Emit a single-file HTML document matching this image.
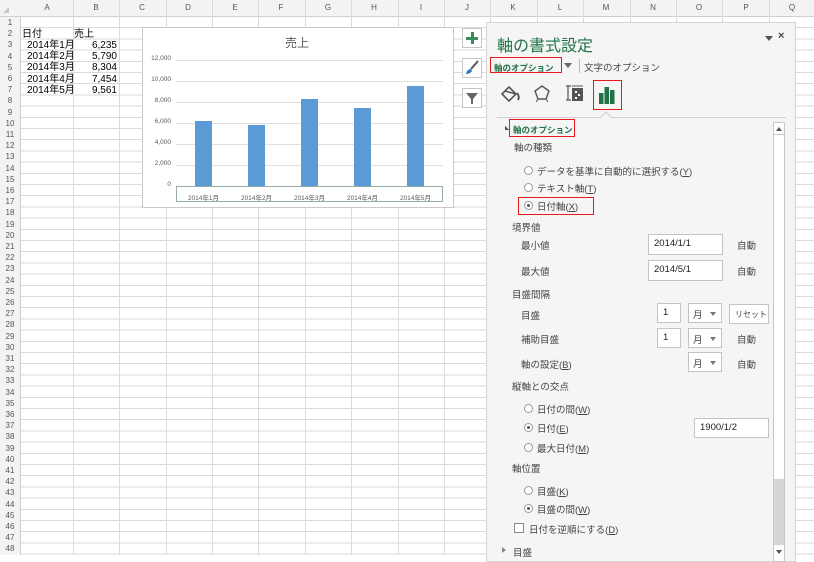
<!DOCTYPE html>
<html><head><meta charset="utf-8"><style>
*{margin:0;padding:0;box-sizing:border-box}
body{width:814px;height:555px;overflow:hidden;background:#fff;position:relative;font-family:"Liberation Sans","Noto Sans CJK JP",sans-serif;color:#444}
.a{position:absolute;white-space:nowrap}
#hdr{position:absolute;left:0;top:0;width:814px;height:17px;background:#f3f3f3;border-bottom:1px solid #d0d0d0}
#rh{position:absolute;left:0;top:17px;width:21px;height:538px;background:#f3f3f3;border-right:1px solid #d0d0d0}
#grid{position:absolute;left:21px;top:17px;width:793px;height:538px;
background:repeating-linear-gradient(to bottom,transparent 0,transparent 10.2px,#dadada 10.2px,#dadada 11.2px)}
.vl{position:absolute;top:0;width:1px;height:555px;background:#dadada}
.ch{position:absolute;top:3px;font-size:8px;color:#555;width:20px;text-align:center}
.rn{position:absolute;left:0;width:20px;text-align:center;font-size:8px;color:#555;line-height:11px}
.cell{position:absolute;font-size:10px;color:#000;line-height:11px;white-space:nowrap}
#chart{position:absolute;left:142px;top:27px;width:312px;height:181px;background:#fff;border:1px solid #c8c8c8}
.gl{position:absolute;left:33px;width:267px;height:1px;background:#e0e0e0}
.yl{position:absolute;left:0;width:28px;text-align:right;font-size:6.5px;color:#595959}
.bar{position:absolute;width:17px;background:#5b9bd5}
.xl{position:absolute;font-size:6.5px;color:#595959;width:53px;text-align:center}
.sb{position:absolute;left:462px;width:20px;height:20px;border:1px solid #c6c6c6;background:#fff}
#pane{position:absolute;left:486px;top:22px;width:310px;height:540px;background:#f5f5f5;border:1px solid #d4d4d4}
.t{position:absolute;font-size:9.5px;color:#444;white-space:nowrap}
.rad{position:absolute;width:9px;height:9px;border:1px solid #9a9a9a;border-radius:50%;background:#fff}
.rad.on::after{content:"";position:absolute;left:2px;top:2px;width:3px;height:3px;border-radius:50%;background:#555}
.inp{position:absolute;background:#fff;border:1px solid #c4c4c4;font-size:9.5px;color:#222;padding:3px 0 0 5px;white-space:nowrap}
.sel{position:absolute;background:#fff;border:1px solid #c4c4c4;font-size:9.5px;color:#444;padding:3px 0 0 4px}
.sel::after{content:"";position:absolute;right:5px;top:8px;border:3px solid transparent;border-top:4px solid #777}
.red{position:absolute;border:1.5px solid #e8191b}
u{text-decoration:underline}
</style></head><body>
<div id="hdr"></div>
<div id="rh"></div>
<div id="grid"></div>
<div class="vl" style="left:73px"></div><div class="vl" style="left:119px"></div><div class="vl" style="left:166px"></div><div class="vl" style="left:212px"></div><div class="vl" style="left:258px"></div><div class="vl" style="left:305px"></div><div class="vl" style="left:351px"></div><div class="vl" style="left:398px"></div><div class="vl" style="left:444px"></div><div class="vl" style="left:490px"></div><div class="vl" style="left:537px"></div><div class="vl" style="left:583px"></div><div class="vl" style="left:630px"></div><div class="vl" style="left:676px"></div><div class="vl" style="left:722px"></div><div class="vl" style="left:769px"></div>
<div class="a" style="left:3px;top:7px;width:0;height:0;border-left:6px solid transparent;border-bottom:6px solid #c8c8c8"></div>
<div class="ch" style="left:37px">A</div><div class="ch" style="left:86px">B</div><div class="ch" style="left:132px">C</div><div class="ch" style="left:178px">D</div><div class="ch" style="left:225px">E</div><div class="ch" style="left:271px">F</div><div class="ch" style="left:318px">G</div><div class="ch" style="left:364px">H</div><div class="ch" style="left:411px">I</div><div class="ch" style="left:457px">J</div><div class="ch" style="left:503px">K</div><div class="ch" style="left:550px">L</div><div class="ch" style="left:596px">M</div><div class="ch" style="left:643px">N</div><div class="ch" style="left:689px">O</div><div class="ch" style="left:736px">P</div><div class="ch" style="left:782px">Q</div>
<div style="position:absolute;left:0;top:17px">
<div class="rn" style="top:0px">1</div><div class="rn" style="top:11.2px">2</div><div class="rn" style="top:22.4px">3</div><div class="rn" style="top:33.6px">4</div><div class="rn" style="top:44.8px">5</div><div class="rn" style="top:56px">6</div><div class="rn" style="top:67.2px">7</div><div class="rn" style="top:78.4px">8</div><div class="rn" style="top:89.6px">9</div><div class="rn" style="top:100.8px">10</div><div class="rn" style="top:112px">11</div><div class="rn" style="top:123.2px">12</div><div class="rn" style="top:134.4px">13</div><div class="rn" style="top:145.6px">14</div><div class="rn" style="top:156.8px">15</div><div class="rn" style="top:168px">16</div><div class="rn" style="top:179.2px">17</div><div class="rn" style="top:190.4px">18</div><div class="rn" style="top:201.6px">19</div><div class="rn" style="top:212.8px">20</div><div class="rn" style="top:224px">21</div><div class="rn" style="top:235.2px">22</div><div class="rn" style="top:246.4px">23</div><div class="rn" style="top:257.6px">24</div><div class="rn" style="top:268.8px">25</div><div class="rn" style="top:280px">26</div><div class="rn" style="top:291.2px">27</div><div class="rn" style="top:302.4px">28</div><div class="rn" style="top:313.6px">29</div><div class="rn" style="top:324.8px">30</div><div class="rn" style="top:336px">31</div><div class="rn" style="top:347.2px">32</div><div class="rn" style="top:358.4px">33</div><div class="rn" style="top:369.6px">34</div><div class="rn" style="top:380.8px">35</div><div class="rn" style="top:392px">36</div><div class="rn" style="top:403.2px">37</div><div class="rn" style="top:414.4px">38</div><div class="rn" style="top:425.6px">39</div><div class="rn" style="top:436.8px">40</div><div class="rn" style="top:448px">41</div><div class="rn" style="top:459.2px">42</div><div class="rn" style="top:470.4px">43</div><div class="rn" style="top:481.6px">44</div><div class="rn" style="top:492.8px">45</div><div class="rn" style="top:504px">46</div><div class="rn" style="top:515.2px">47</div><div class="rn" style="top:526.4px">48</div>
</div>
<div class="cell" style="left:22px;top:29px">日付</div><div class="cell" style="left:74px;top:29px">売上</div>
<div class="cell" style="left:27px;top:40px">2014年1月</div><div class="cell" style="left:88px;top:40px;width:29px;text-align:right">6,235</div>
<div class="cell" style="left:27px;top:51px">2014年2月</div><div class="cell" style="left:88px;top:51px;width:29px;text-align:right">5,790</div>
<div class="cell" style="left:27px;top:62px">2014年3月</div><div class="cell" style="left:88px;top:62px;width:29px;text-align:right">8,304</div>
<div class="cell" style="left:27px;top:74px">2014年4月</div><div class="cell" style="left:88px;top:74px;width:29px;text-align:right">7,454</div>
<div class="cell" style="left:27px;top:85px">2014年5月</div><div class="cell" style="left:88px;top:85px;width:29px;text-align:right">9,561</div>

<div id="chart">
<div class="a" style="left:142px;top:6px;font-size:12px;color:#595959">売上</div>
<div class="gl" style="top:32px"></div><div class="gl" style="top:53px"></div><div class="gl" style="top:74px"></div><div class="gl" style="top:95px"></div><div class="gl" style="top:116px"></div><div class="gl" style="top:137px"></div><div class="gl" style="top:158px;background:#bfbfbf"></div>
<div class="yl" style="top:27px">12,000</div><div class="yl" style="top:48px">10,000</div><div class="yl" style="top:69px">8,000</div><div class="yl" style="top:90px">6,000</div><div class="yl" style="top:111px">4,000</div><div class="yl" style="top:132px">2,000</div><div class="yl" style="top:153px">0</div>
<div class="bar" style="left:52px;top:93px;height:65px"></div>
<div class="bar" style="left:105px;top:97px;height:61px"></div>
<div class="bar" style="left:158px;top:71px;height:87px"></div>
<div class="bar" style="left:211px;top:80px;height:78px"></div>
<div class="bar" style="left:264px;top:58px;height:100px"></div>
<div class="a" style="left:33px;top:158px;width:267px;height:16px;border:1px solid #9aa"></div>
<div class="xl" style="left:34px;top:164px">2014年1月</div><div class="xl" style="left:87px;top:164px">2014年2月</div><div class="xl" style="left:140px;top:164px">2014年3月</div><div class="xl" style="left:193px;top:164px">2014年4月</div><div class="xl" style="left:246px;top:164px">2014年5月</div>
</div>
<div class="sb" style="top:28px"><div class="a" style="left:8px;top:3px;width:3px;height:12px;background:#3d8b5a"></div><div class="a" style="left:3px;top:8px;width:12px;height:3px;background:#3d8b5a"></div></div>
<div class="sb" style="top:58px"><svg width="18" height="18" style="position:absolute;left:0;top:0"><path d="M15 2 L8 10" stroke="#555" stroke-width="2"/><path d="M3 15 Q4 10 8 10 L9 12 Q7 15 3 15Z" fill="#2e75b6"/></svg></div>
<div class="sb" style="top:88px"><svg width="18" height="18" style="position:absolute;left:0;top:0"><path d="M3 4 H15 L10 10 V15 H8 V10Z" fill="#666"/></svg></div>

<div id="pane">
<div class="a" style="left:10px;top:9px;font-size:16px;color:#217346">軸の書式設定</div>
<div class="a" style="left:278px;top:13px;border:4px solid transparent;border-top:5px solid #555"></div>
<div class="a" style="left:291px;top:7px;font-size:11px;color:#444;font-weight:bold">×</div>
<div class="a" style="left:7px;top:39px;font-size:8.5px;color:#217346;font-weight:bold">軸のオプション</div>
<div class="a" style="left:77px;top:40px;border:4px solid transparent;border-top:5px solid #666"></div>
<div class="a" style="left:92px;top:36px;width:1px;height:14px;background:#bbb"></div>
<div class="a" style="left:97px;top:37px;font-size:9.5px;color:#444">文字のオプション</div>
<svg class="a" style="left:12px;top:60px" width="24" height="24"><path d="M3 11 L10 4 L17 11 L10 18Z" fill="none" stroke="#555" stroke-width="1.6"/><path d="M6 8 L17 11" stroke="#555" stroke-width="1.5"/><path d="M18 10 Q21 14 19 17" stroke="#555" stroke-width="2" fill="none"/></svg>
<svg class="a" style="left:44px;top:60px" width="22" height="22"><path d="M11 3 L18 8 L15 16 L7 16 L4 8Z" fill="none" stroke="#555" stroke-width="1.4"/><path d="M7 16 L5 19 M15 16 L17 19" stroke="#555"/></svg>
<svg class="a" style="left:76px;top:60px" width="22" height="22"><path d="M3 3 H8 M5 3 V17 M3 17 H8" stroke="#555" stroke-width="1.2"/><rect x="9" y="5" width="11" height="13" fill="#555"/><rect x="12" y="8" width="2" height="2" fill="#fff"/><rect x="15" y="11" width="2" height="2" fill="#fff"/><rect x="12" y="14" width="2" height="2" fill="#fff"/><path d="M9 3 H20" stroke="#555"/></svg>
<svg class="a" style="left:110px;top:62px" width="20" height="20"><rect x="2" y="8" width="4.5" height="11" fill="#217346"/><rect x="7.5" y="2" width="4.5" height="17" fill="#217346"/><rect x="13" y="5" width="4.5" height="14" fill="#217346"/></svg>
<div class="a" style="left:10px;top:94px;width:289px;height:1px;background:#d0d0d0"></div>
<div class="a" style="left:115px;top:90px;width:8px;height:8px;background:#f5f5f5;border-left:1px solid #ccc;border-top:1px solid #ccc;transform:rotate(45deg)"></div>
<div class="a" style="left:15px;top:104px;border:3px solid transparent;border-right:3px solid #555;transform:rotate(-45deg)"></div>
<div class="a" style="left:26px;top:101px;font-size:8.5px;color:#217346;font-weight:bold">軸のオプション</div>
<div class="t" style="left:27px;top:117px">軸の種類</div>
<div class="rad" style="left:37px;top:143px"></div><div class="t" style="left:50px;top:141px">データを基準に自動的に選択する(<u>Y</u>)</div>
<div class="rad" style="left:37px;top:160px"></div><div class="t" style="left:50px;top:158px">テキスト軸(<u>T</u>)</div>
<div class="rad on" style="left:37px;top:178px"></div><div class="t" style="left:50px;top:176px">日付軸(<u>X</u>)</div>
<div class="t" style="left:25px;top:197px">境界値</div>
<div class="t" style="left:34px;top:215px">最小値</div><div class="inp" style="left:161px;top:211px;width:75px;height:21px">2014/1/1</div><div class="t" style="left:250px;top:215px">自動</div>
<div class="t" style="left:34px;top:241px">最大値</div><div class="inp" style="left:161px;top:237px;width:75px;height:21px">2014/5/1</div><div class="t" style="left:250px;top:241px">自動</div>
<div class="t" style="left:25px;top:264px">目盛間隔</div>
<div class="t" style="left:34px;top:285px">目盛</div><div class="inp" style="left:170px;top:280px;width:24px;height:20px">1</div><div class="sel" style="left:201px;top:280px;width:34px;height:20px">月</div><div class="inp" style="left:242px;top:281px;width:40px;height:20px;font-size:8px;color:#444;padding:4px 0 0 5px">リセット</div>
<div class="t" style="left:34px;top:309px">補助目盛</div><div class="inp" style="left:170px;top:305px;width:24px;height:20px">1</div><div class="sel" style="left:201px;top:305px;width:34px;height:20px">月</div><div class="t" style="left:250px;top:309px">自動</div>
<div class="t" style="left:34px;top:334px">軸の設定(<u>B</u>)</div><div class="sel" style="left:201px;top:329px;width:34px;height:20px">月</div><div class="t" style="left:250px;top:334px">自動</div>
<div class="t" style="left:25px;top:356px">縦軸との交点</div>
<div class="rad" style="left:37px;top:381px"></div><div class="t" style="left:50px;top:379px">日付の間(<u>W</u>)</div>
<div class="rad on" style="left:37px;top:400px"></div><div class="t" style="left:50px;top:398px">日付(<u>E</u>)</div><div class="inp" style="left:207px;top:395px;width:75px;height:20px">1900/1/2</div>
<div class="rad" style="left:37px;top:420px"></div><div class="t" style="left:50px;top:418px">最大日付(<u>M</u>)</div>
<div class="t" style="left:25px;top:438px">軸位置</div>
<div class="rad" style="left:37px;top:463px"></div><div class="t" style="left:50px;top:461px">目盛(<u>K</u>)</div>
<div class="rad on" style="left:37px;top:481px"></div><div class="t" style="left:50px;top:479px">目盛の間(<u>W</u>)</div>
<div class="a" style="left:27px;top:500px;width:10px;height:10px;border:1px solid #888;background:#fff"></div><div class="t" style="left:42px;top:499px">日付を逆順にする(<u>D</u>)</div>
<div class="a" style="left:15px;top:524px;border:3px solid transparent;border-left:4px solid #888"></div><div class="t" style="left:26px;top:522px">目盛</div>
<div class="a" style="left:286px;top:99px;width:12px;height:440px;background:#fff;border:1px solid #c8c8c8"></div>
<div class="a" style="left:287px;top:100px;width:10px;height:12px;background:#fff;border-bottom:1px solid #c8c8c8"></div>
<div class="a" style="left:289px;top:104px;border:3px solid transparent;border-bottom:4px solid #555;border-top:0"></div>
<div class="a" style="left:287px;top:456px;width:10px;height:66px;background:#d6d6d6"></div>
<div class="a" style="left:289px;top:527px;border:3px solid transparent;border-top:4px solid #555;border-bottom:0"></div>
</div>
<div class="red" style="left:490px;top:57px;width:72px;height:16px"></div>
<div class="red" style="left:593px;top:80px;width:29px;height:30px"></div>
<div class="red" style="left:509px;top:119px;width:66px;height:18px"></div>
<div class="red" style="left:518px;top:197px;width:76px;height:18px"></div>
</body></html>
